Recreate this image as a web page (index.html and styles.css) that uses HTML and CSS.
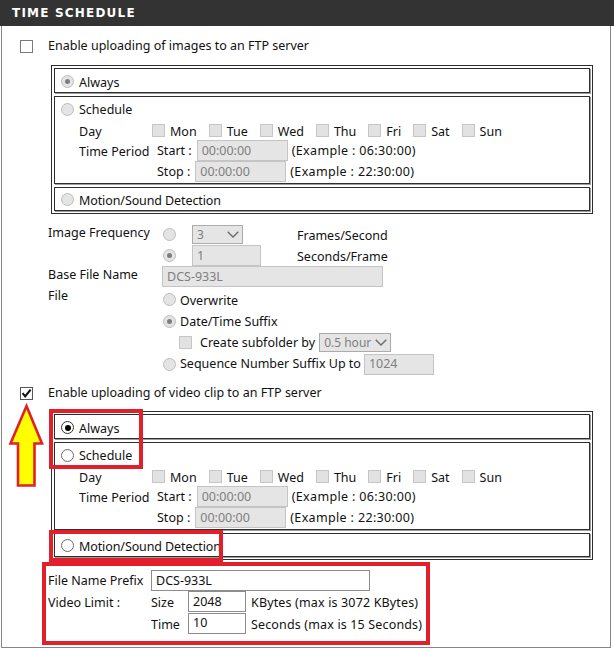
FILE: index.html
```html
<!DOCTYPE html>
<html>
<head>
<meta charset="utf-8">
<title>Time Schedule</title>
<link rel="stylesheet" href="styles.css">
</head>
<body>
<div class="page">
  <div class="title">TIME SCHEDULE</div>
  <div class="panel">

    <div class="enable"><span class="cb"></span><span>Enable uploading of images to an FTP server</span></div>
    <div class="box">
      <div class="cell c1"><span class="rd on"></span><span class="tx">Always</span></div>
      <div class="cell c2">
        <div class="line"><span class="rd"></span><span>Schedule</span></div>
        <div class="sgrid">
          <div class="tx">Day</div>
          <div class="days">
            <span class="day"><span class="cb dis"></span><span class="tx">Mon</span></span>
            <span class="day"><span class="cb dis"></span><span class="tx">Tue</span></span>
            <span class="day"><span class="cb dis"></span><span class="tx">Wed</span></span>
            <span class="day"><span class="cb dis"></span><span class="tx">Thu</span></span>
            <span class="day"><span class="cb dis"></span><span class="tx">Fri</span></span>
            <span class="day"><span class="cb dis"></span><span class="tx">Sat</span></span>
            <span class="day"><span class="cb dis"></span><span class="tx">Sun</span></span>
          </div>
          <div class="tx">Time Period</div>
          <div class="trow"><span>Start :</span><span class="inp tm">00:00:00</span><span class="ex">(Example : 06:30:00)</span></div>
          <div></div>
          <div class="trow"><span>Stop :</span><span class="inp tm">00:00:00</span><span class="ex">(Example : 22:30:00)</span></div>
        </div>
      </div>
      <div class="cell c3"><span class="rd"></span><span class="tx">Motion/Sound Detection</span></div>
    </div>

    <div class="opts">
      <div class="orow">
        <div class="lbl">Image Frequency</div>
        <span class="rd rdc"></span>
        <span class="sel s3"><span>3</span><svg class="chev" width="12" height="7" viewBox="0 0 12 7"><polyline points="0.7,0.7 6,6 11.3,0.7" fill="none" stroke="#6b6b6b" stroke-width="1.4"/></svg></span>
        <span class="tx">Frames/Second</span>
      </div>
      <div class="orow">
        <div></div>
        <span class="rd on rdc"></span>
        <span class="inp i1">1</span>
        <span class="tx">Seconds/Frame</span>
      </div>
      <div class="orow">
        <div class="lbl">Base File Name</div>
        <span class="inp base">DCS-933L</span>
      </div>
      <div class="orow tall">
        <div class="lbl">File</div>
        <div class="fopt"><span class="rd"></span><span class="tx">Overwrite</span></div>
      </div>
      <div class="orow">
        <div></div>
        <div class="fopt"><span class="rd on"></span><span>Date/Time Suffix</span></div>
      </div>
      <div class="orow">
        <div></div>
        <div class="fopt sub"><span class="cb dis"></span><span>Create subfolder by</span>
          <span class="sel s05"><span>0.5 hour</span><svg class="chev" width="12" height="7" viewBox="0 0 12 7"><polyline points="0.7,0.7 6,6 11.3,0.7" fill="none" stroke="#6b6b6b" stroke-width="1.4"/></svg></span>
        </div>
      </div>
      <div class="orow last">
        <div></div>
        <div class="fopt"><span class="rd"></span><span>Sequence Number Suffix Up to</span><span class="inp seq">1024</span></div>
      </div>
    </div>

    <div class="enable vid"><span class="cb chk"><svg width="11" height="11" viewBox="0 0 11 11"><polyline points="1.6,5.2 4.2,8.3 9.6,1.6" fill="none" stroke="#111" stroke-width="2.1"/></svg></span><span>Enable uploading of video clip to an FTP server</span></div>
    <div class="box vbox">
      <div class="cell c1"><span class="rd en on"></span><span class="tx">Always</span></div>
      <div class="cell c2">
        <div class="line"><span class="rd en"></span><span>Schedule</span></div>
        <div class="sgrid">
          <div class="tx">Day</div>
          <div class="days">
            <span class="day"><span class="cb dis"></span><span class="tx">Mon</span></span>
            <span class="day"><span class="cb dis"></span><span class="tx">Tue</span></span>
            <span class="day"><span class="cb dis"></span><span class="tx">Wed</span></span>
            <span class="day"><span class="cb dis"></span><span class="tx">Thu</span></span>
            <span class="day"><span class="cb dis"></span><span class="tx">Fri</span></span>
            <span class="day"><span class="cb dis"></span><span class="tx">Sat</span></span>
            <span class="day"><span class="cb dis"></span><span class="tx">Sun</span></span>
          </div>
          <div class="tx">Time Period</div>
          <div class="trow"><span>Start :</span><span class="inp tm">00:00:00</span><span class="ex">(Example : 06:30:00)</span></div>
          <div></div>
          <div class="trow"><span>Stop :</span><span class="inp tm">00:00:00</span><span class="ex">(Example : 22:30:00)</span></div>
        </div>
      </div>
      <div class="cell c3"><span class="rd en"></span><span class="tx">Motion/Sound Detection</span></div>
    </div>

    <div class="vset">
      <div class="vrow">
        <div>File Name Prefix</div>
        <span class="inp en prefix">DCS-933L</span>
      </div>
      <div class="vrow">
        <div class="tx">Video Limit :</div>
        <span class="tx">Size</span>
        <span class="inp en lim">2048</span>
        <span class="note tx">KBytes (max is 3072 KBytes)</span>
      </div>
      <div class="vrow last">
        <div></div>
        <span class="tx">Time</span>
        <span class="inp en lim">10</span>
        <span class="note tx">Seconds (max is 15 Seconds)</span>
      </div>
    </div>
  </div>

  <div class="mark m1"></div>
  <div class="mark m2"></div>
  <div class="mark m3"></div>
  <svg class="arrow" width="40" height="90" viewBox="0 0 40 90">
    <polygon points="19.5,4 35,41.5 27.5,41.5 27.5,83.5 11,83.5 11,41.5 3.5,41.5" fill="#ffff00" stroke="#e2202b" stroke-width="2.6" stroke-linejoin="miter"/>
  </svg>
</div>
</body>
</html>
```
FILE: styles.css
```css
* { box-sizing: border-box; }
html, body { margin: 0; padding: 0; background: #fff; }
body {
  font-family: "Noto Sans", "Liberation Sans", sans-serif;
  font-size: 12.5px;
  line-height: 16px;
  color: #111;
}
.page { position: relative; width: 614px; height: 651px; }

.title {
  height: 26px;
  background: #333;
  color: #fff;
  font-family: "DejaVu Sans", sans-serif;
  font-weight: bold;
  font-size: 12px;
  letter-spacing: 1.2px;
  line-height: 26px;
  padding-left: 12px;
}
.panel {
  margin-left: 1px;
  width: 610px;
  border: 1px solid #868686;
  border-top: none;
  padding: 13px 0 13px 0;
}

/* small downward nudge for text in centred rows */
.tx { padding-top: 3px; }

.enable { display: flex; align-items: center; height: 14px; margin-left: 18px; gap: 15px; }
.enable.vid { margin-top: 11px; }

/* checkbox & radio */
.cb {
  flex: none;
  width: 13px; height: 13px;
  border: 1px solid #7a7a7a;
  background: #fff;
  display: flex; align-items: center; justify-content: center;
}
.cb.dis { background: #e2e2e2; border-color: #c6c6c6; }
.cb.chk { border-color: #555; }
.rd {
  flex: none;
  position: relative;
  width: 13px; height: 13px;
  border-radius: 50%;
  border: 1px solid #bdbdbd;
  background: #e4e4e4;
}
.rd.on::after {
  content: "";
  position: absolute;
  left: 3px; top: 3px;
  width: 5px; height: 5px;
  border-radius: 50%;
  background: #7e7e7e;
}
.rd.en { background: #fff; border-color: #6a6a6a; }
.rd.en.on { border-color: #333; }
.rd.en.on::after { background: #000; left: 2.5px; top: 2.5px; width: 6px; height: 6px; }

/* boxes */
.box {
  margin: 12px 0 0 49px;
  width: 542px;
  border: 1px solid #2e2e2e;
  padding: 2px;
  display: flex;
  flex-direction: column;
  gap: 3px;
}
.vbox { margin-top: 11px; }
.cell { border: 1px solid #2e2e2e; box-shadow: 1px 1px 0 #9c9c9c; }
.c1 { height: 25px; display: flex; align-items: center; padding: 2px 0 0 6px; gap: 5px; }
.c2 { height: 88px; padding-top: 2px; }
.c3 { height: 24px; display: flex; align-items: center; padding: 1px 0 0 6px; gap: 5px; }
.c3 .tx { letter-spacing: -0.1px; }
.line { height: 21px; display: flex; align-items: center; padding-left: 6px; gap: 5px; }
.sgrid {
  display: grid;
  grid-template-columns: 73px auto;
  grid-template-rows: 20px 21px 21px;
  align-items: center;
  padding-left: 24px;
}
.days { display: flex; align-items: center; gap: 12px; }
.day { display: flex; align-items: center; gap: 5px; }
.trow { display: flex; align-items: center; padding-left: 5px; }
.trow .inp { margin-left: 5px; }
.ex { margin-left: 4px; letter-spacing: 0.35px; }

/* inputs */
.inp {
  display: flex; align-items: center;
  height: 21px;
  border: 1px solid #c4c4c4;
  background: #e5e5e5;
  color: #7f7f7f;
  padding-left: 4px;
  white-space: nowrap;
}
.inp.en { background: #fff; border-color: #8d8d8d; color: #111; }
.tm { width: 91px; }
.i1 { width: 69px; }
.base { width: 221px; grid-column: 2 / -1; }
.seq { width: 70px; margin-left: -1px; }
.prefix { width: 219px; grid-column: 2 / -1; }
.lim { width: 58px; }

.sel {
  display: flex; align-items: center; justify-content: space-between;
  height: 19px;
  border: 1px solid #ababab;
  background: #e5e5e5;
  color: #7f7f7f;
  font-size: 12px;
  padding: 0 3px 0 4px;
}
.s3 { width: 51px; }
.s05 { width: 72px; margin-left: -4px; }
.chev { display: block; flex: none; }

/* option rows */
.opts { margin: 10px 0 0 46px; }
.orow {
  display: grid;
  grid-template-columns: 114px 30px 105px auto;
  align-items: center;
  height: 21px;
}
.orow.tall { height: 24px; }
.orow.last { height: 22px; }
.orow .lbl { align-self: start; padding-top: 1px; }
.rdc { margin-left: 1px; }
.fopt { grid-column: 2 / -1; display: flex; align-items: center; gap: 4px; padding-left: 1px; }
.fopt.sub { padding-left: 17px; gap: 8px; }

.vset { margin: 10px 0 0 46px; }
.vrow {
  display: grid;
  grid-template-columns: 103px 37px 58px auto;
  align-items: center;
  height: 21px;
}
.vrow.last { height: 22px; }
.note { padding-left: 5px; letter-spacing: 0.15px; }

/* annotation overlays */
.mark { position: absolute; border: 4px solid #e2202b; }
.m1 { left: 49px; top: 409px; width: 94px; height: 60px; }
.m2 { left: 49px; top: 530px; width: 174px; height: 32px; }
.m3 { left: 42px; top: 562px; width: 388px; height: 83px; }
.arrow { position: absolute; left: 7px; top: 402px; }
```
